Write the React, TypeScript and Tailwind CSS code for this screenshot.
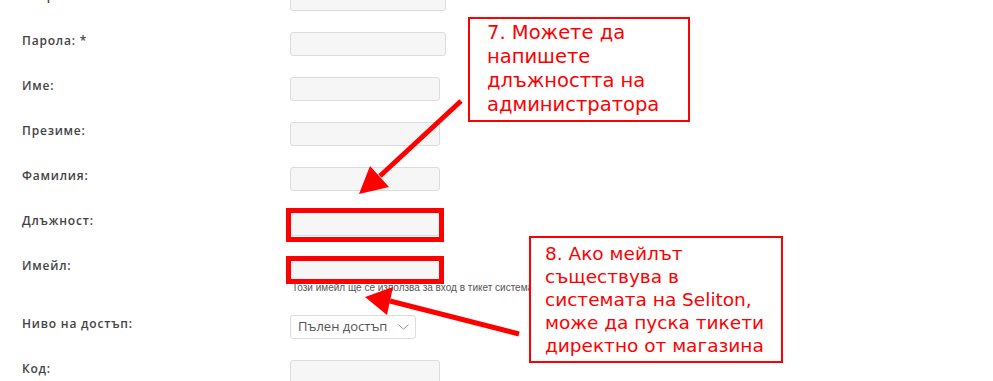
import React from "react";

const labelCls =
  "w-[268px] shrink-0 text-[12px] leading-[17px] font-semibold tracking-[0.8px] text-[#444]";
const inputCls =
  "block h-[24px] rounded-[3px] border border-[#dcdcdc] bg-[#f6f6f6]";

function Row({
  label,
  wide,
  children,
}: {
  label: string;
  wide?: boolean;
  children?: React.ReactNode;
}) {
  return (
    <div className="flex items-start mb-[21px]">
      <div className={labelCls}>{label}</div>
      <div className="relative">
        {children ?? <div className={`${inputCls} ${wide ? "w-[156px]" : "w-[150px]"}`} />}
      </div>
    </div>
  );
}

function Callout({ className, lines }: { className: string; lines: string[] }) {
  return (
    <div
      className={`absolute border-2 border-[#ff0000] bg-white text-[#ff0000] font-['DejaVu_Sans',sans-serif] ${className}`}
    >
      {lines.map((l, i) => (
        <div key={i} className="whitespace-nowrap">
          {l}
        </div>
      ))}
    </div>
  );
}

export default function App() {
  return (
    <main className="relative w-[993px] h-[381px] overflow-hidden bg-white font-['Open_Sans',sans-serif]">
      {/* form */}
      <div className="pl-[22px] -mt-[13px]">
        <Row label="Потребител: *" wide />
        <Row label="Парола: *" wide />
        <Row label="Име:" />
        <Row label="Презиме:" />
        <Row label="Фамилия:" />
        <Row label="Длъжност:">
          <div className={`${inputCls} w-[150px]`} />
          <div className="absolute -left-[4px] -right-[4px] -top-[4px] -bottom-[6px] border-[5px] border-[#ff0000]" />
        </Row>
        <Row label="Имейл:">
          <div className="relative w-[150px]">
            <div className={`${inputCls} w-[150px]`} />
            <div className="absolute -left-[4px] -right-[4px] -top-[1px] -bottom-[3px] border-[5px] border-[#ff0000]" />
          </div>
          <p className="pl-[2px] text-[10px] leading-[13px] text-[#555] whitespace-nowrap font-['Liberation_Sans',sans-serif]">
            Този имейл ще се използва за вход в тикет системата
          </p>
        </Row>
        <Row label="Ниво на достъп:">
          <div className="flex h-[24px] w-[126px] items-center justify-between rounded-[3px] border border-[#dcdcdc] bg-white pl-[7px] pr-[6px]">
            <span className="text-[13px] text-[#555]">Пълен достъп</span>
            <svg width="11" height="6" viewBox="0 0 11 6" fill="none">
              <path d="M0.5 0.5 L5.5 5.2 L10.5 0.5" stroke="#9a9a9a" strokeWidth="1" />
            </svg>
          </div>
        </Row>
        <Row label="Код:" />
      </div>

      {/* annotations */}
      <svg className="absolute left-0 top-0" width="993" height="381" viewBox="0 0 993 381">
        <line x1="461" y1="101" x2="380" y2="176" stroke="#ff0000" strokeWidth="5" />
        <polygon points="359,194 370,166 389,187" fill="#ff0000" />
        <line x1="519" y1="334" x2="390" y2="301" stroke="#ff0000" strokeWidth="5" />
        <polygon points="365,297 393,287 387,315" fill="#ff0000" />
      </svg>

      <Callout
        className="left-[468px] top-[17px] w-[222px] h-[105px] pl-[17px] pt-[2px] text-[19.5px] leading-[24px]"
        lines={["7. Можете да", "напишете", "длъжността на", "администратора"]}
      />
      <Callout
        className="left-[529px] top-[236px] w-[254px] h-[127px] pl-[14px] pt-[4px] text-[18.5px] leading-[23px]"
        lines={[
          "8. Ако мейлът",
          "съществува в",
          "системата на Seliton,",
          "може да пуска тикети",
          "директно от магазина",
        ]}
      />
    </main>
  );
}
